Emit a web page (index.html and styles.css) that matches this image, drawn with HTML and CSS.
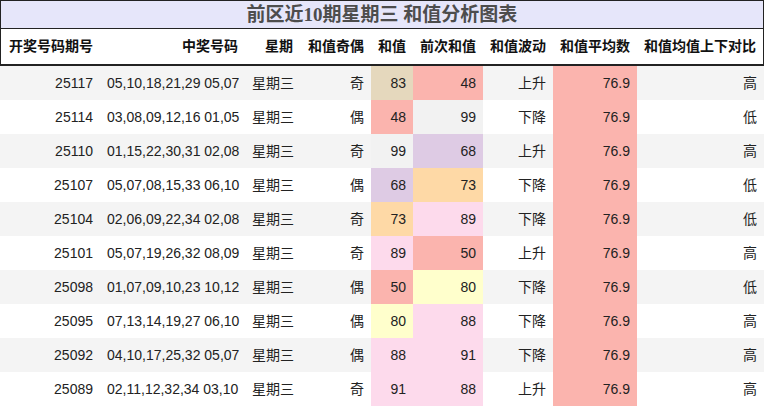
FILE: index.html
```html
<!DOCTYPE html>
<html lang="zh">
<head>
<meta charset="utf-8">
<link rel="stylesheet" href="styles.css">
</head>
<body>
<div class="chart">
  <div class="title">前区近10期星期三 和值分析图表</div>
  <div class="row head">
    <div>开奖号码期号</div><div>中奖号码</div><div>星期</div><div>和值奇偶</div><div>和值</div><div>前次和值</div><div>和值波动</div><div>和值平均数</div><div>和值均值上下对比</div>
  </div>
  <div class="row odd">
    <div>25117</div><div>05,10,18,21,29 05,07</div><div>星期三</div><div>奇</div><div class="c-tan">83</div><div class="c-salmon">48</div><div>上升</div><div class="c-salmon">76.9</div><div>高</div>
  </div>
  <div class="row">
    <div>25114</div><div>03,08,09,12,16 01,05</div><div>星期三</div><div>偶</div><div class="c-salmon">48</div><div class="c-gray">99</div><div>下降</div><div class="c-salmon">76.9</div><div>低</div>
  </div>
  <div class="row odd">
    <div>25110</div><div>01,15,22,30,31 02,08</div><div>星期三</div><div>奇</div><div class="c-gray">99</div><div class="c-purple">68</div><div>上升</div><div class="c-salmon">76.9</div><div>高</div>
  </div>
  <div class="row">
    <div>25107</div><div>05,07,08,15,33 06,10</div><div>星期三</div><div>偶</div><div class="c-purple">68</div><div class="c-orange">73</div><div>下降</div><div class="c-salmon">76.9</div><div>低</div>
  </div>
  <div class="row odd">
    <div>25104</div><div>02,06,09,22,34 02,08</div><div>星期三</div><div>奇</div><div class="c-orange">73</div><div class="c-pink">89</div><div>下降</div><div class="c-salmon">76.9</div><div>低</div>
  </div>
  <div class="row">
    <div>25101</div><div>05,07,19,26,32 08,09</div><div>星期三</div><div>奇</div><div class="c-pink">89</div><div class="c-salmon">50</div><div>上升</div><div class="c-salmon">76.9</div><div>高</div>
  </div>
  <div class="row odd">
    <div>25098</div><div>01,07,09,10,23 10,12</div><div>星期三</div><div>偶</div><div class="c-salmon">50</div><div class="c-yellow">80</div><div>下降</div><div class="c-salmon">76.9</div><div>低</div>
  </div>
  <div class="row">
    <div>25095</div><div>07,13,14,19,27 06,10</div><div>星期三</div><div>偶</div><div class="c-yellow">80</div><div class="c-pink">88</div><div>下降</div><div class="c-salmon">76.9</div><div>高</div>
  </div>
  <div class="row odd">
    <div>25092</div><div>04,10,17,25,32 05,07</div><div>星期三</div><div>偶</div><div class="c-pink">88</div><div class="c-pink">91</div><div>下降</div><div class="c-salmon">76.9</div><div>高</div>
  </div>
  <div class="row">
    <div>25089</div><div>02,11,12,32,34 03,10</div><div>星期三</div><div>奇</div><div class="c-pink">91</div><div class="c-pink">88</div><div>上升</div><div class="c-salmon">76.9</div><div>高</div>
  </div>
</div>
</body>
</html>
```
FILE: styles.css
```css
* { box-sizing: border-box; }
html, body { margin: 0; padding: 0; background: #fff; }
body {
  font-family: "Liberation Sans", "Noto Sans CJK SC", sans-serif;
  font-size: 14px;
  color: #222;
}
.chart { width: 764px; }
.title {
  height: 29px;
  border: 1px solid #222;
  background: #e6e6fa;
  color: #4d4d4d;
  font-family: "Liberation Serif", "Noto Sans CJK SC", serif;
  font-weight: bold;
  font-size: 19px;
  line-height: 27px;
  text-align: center;
}
.row {
  display: grid;
  grid-template-columns: 100px 145px 55px 71px 42px 70px 70px 84px 127px;
  height: 34px;
  line-height: 34px;
  background: #fff;
}
.row.odd { background: #f4f4f4; }
.row > div {
  text-align: right;
  padding: 0 7px;
  white-space: nowrap;
}
.row.head {
  grid-template-columns: 99px 145px 55px 71px 42px 70px 70px 84px 126px;
  height: 37px;
  line-height: 35px;
  border-left: 1px solid #222;
  border-right: 1px solid #222;
  border-bottom: 2px solid #222;
  font-weight: bold;
  color: #111;
}
.c-tan { background: #e5d8bd; }
.c-salmon { background: #fbb4ae; }
.c-gray { background: #f2f2f2; }
.c-purple { background: #decbe4; }
.c-orange { background: #fed9a6; }
.c-pink { background: #fddaec; }
.c-yellow { background: #ffffcc; }
```
